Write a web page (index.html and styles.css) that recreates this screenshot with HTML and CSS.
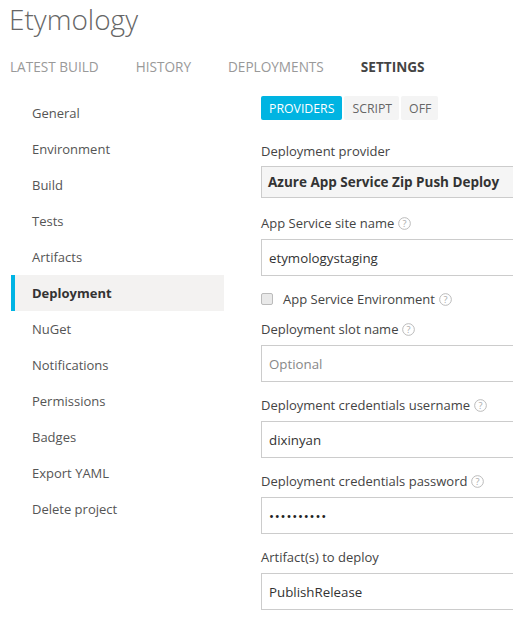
FILE: index.html
```html
<!DOCTYPE html>
<html>
<head>
<meta charset="utf-8">
<link rel="stylesheet" href="styles.css">
</head>
<body>
<div class="page">
  <h1 class="title">Etymology</h1>
  <nav class="tabs">
    <span class="tab">LATEST BUILD</span>
    <span class="tab">HISTORY</span>
    <span class="tab">DEPLOYMENTS</span>
    <span class="tab active">SETTINGS</span>
  </nav>
  <div class="main">
    <ul class="side">
      <li>General</li>
      <li>Environment</li>
      <li>Build</li>
      <li>Tests</li>
      <li>Artifacts</li>
      <li class="active">Deployment</li>
      <li>NuGet</li>
      <li>Notifications</li>
      <li>Permissions</li>
      <li>Badges</li>
      <li>Export YAML</li>
      <li>Delete project</li>
    </ul>
    <div class="content">
      <div class="btns">
        <span class="btn on">PROVIDERS</span>
        <span class="btn">SCRIPT</span>
        <span class="btn">OFF</span>
      </div>
      <div class="field first">
        <div class="label">Deployment provider</div>
        <div class="box select">Azure App Service Zip Push Deploy</div>
      </div>
      <div class="field after-select">
        <div class="label">App Service site name <svg class="help" viewBox="0 0 14 14"><circle cx="7" cy="7" r="6.3"/><text x="7" y="10.6">?</text></svg></div>
        <div class="box">etymologystaging</div>
      </div>
      <div class="check">
        <span class="cb"></span>
        <span class="label">App Service Environment <svg class="help" viewBox="0 0 14 14"><circle cx="7" cy="7" r="6.3"/><text x="7" y="10.6">?</text></svg></span>
      </div>
      <div class="field after-check">
        <div class="label">Deployment slot name <svg class="help" viewBox="0 0 14 14"><circle cx="7" cy="7" r="6.3"/><text x="7" y="10.6">?</text></svg></div>
        <div class="box ph">Optional</div>
      </div>
      <div class="field">
        <div class="label">Deployment credentials username <svg class="help" viewBox="0 0 14 14"><circle cx="7" cy="7" r="6.3"/><text x="7" y="10.6">?</text></svg></div>
        <div class="box">dixinyan</div>
      </div>
      <div class="field">
        <div class="label">Deployment credentials password <svg class="help" viewBox="0 0 14 14"><circle cx="7" cy="7" r="6.3"/><text x="7" y="10.6">?</text></svg></div>
        <div class="box pw">••••••••••</div>
      </div>
      <div class="field">
        <div class="label">Artifact(s) to deploy</div>
        <div class="box">PublishRelease</div>
      </div>
    </div>
  </div>
</div>
</body>
</html>
```
FILE: styles.css
```css
html, body {
  margin: 0;
  padding: 0;
  background: #fff;
  overflow: hidden;
}
body {
  font-family: "Open Sans", "Noto Sans", "Liberation Sans", sans-serif;
  font-size: 13px;
  color: #444;
}
.page {
  width: 560px;
}
.title {
  margin: 0;
  padding: 0 0 0 9px;
  height: 40px;
  line-height: 38px;
  font-size: 28px;
  font-weight: 300;
  color: #666;
}
.tabs {
  display: flex;
  gap: 37px;
  padding-left: 10px;
  margin-top: 16px;
  height: 22px;
  line-height: 22px;
}
.tab {
  font-size: 13.6px;
  color: #999;
}
.tab.active {
  font-weight: 700;
  color: #444;
}
.main {
  display: flex;
  margin-top: 17px;
}
.side {
  list-style: none;
  margin: 0 0 0 11px;
  padding: 0;
  width: 213px;
  flex: none;
}
.side li {
  height: 36px;
  line-height: 36px;
  padding-left: 21px;
  color: #555;
  font-size: 13px;
}
.side li.active {
  background: #f3f2f1;
  font-weight: 700;
  color: #333;
  border-left: 4px solid #00b4e4;
  padding-left: 17px;
}
.content {
  margin-left: 37px;
  width: 300px;
  flex: none;
  padding-top: 1px;
}
.btns {
  display: flex;
  gap: 2px;
  height: 24px;
}
.btn {
  display: flex;
  align-items: center;
  padding: 0 7px 0 8px;
  background: #f4f4f4;
  color: #666;
  font-size: 12.3px;
  border-radius: 2px;
}
.btn.on {
  background: #00b4e2;
  color: #fff;
  padding: 0 8px;
}
.field {
  margin-top: 13px;
}
.field.first {
  margin-top: 21px;
}
.field.after-select {
  margin-top: 15px;
}
.field.after-check {
  margin-top: 9px;
}
.label {
  height: 20px;
  line-height: 20px;
  margin-bottom: 6px;
  color: #444;
  font-size: 13px;
  display: flex;
  align-items: center;
}
.field.first .label {
  margin-bottom: 5px;
}
.help {
  width: 13px;
  height: 13px;
  margin-left: 4px;
}
.help circle {
  fill: none;
  stroke: #b5b5b5;
  stroke-width: 1;
}
.help text {
  font-family: "Open Sans", sans-serif;
  font-size: 10px;
  text-anchor: middle;
  fill: #aaa;
}
.box {
  box-sizing: border-box;
  height: 37px;
  border: 1px solid #ccc;
  padding: 0 7px;
  display: flex;
  align-items: center;
  color: #333;
  font-size: 13.3px;
}
.select {
  height: 32px;
  background: #f5f5f5;
  font-weight: 700;
  font-size: 13.5px;
  color: #333;
  padding-left: 6px;
}
.ph {
  color: #888;
}
.pw {
  letter-spacing: 0.8px;
  color: #222;
}
.check {
  display: flex;
  align-items: center;
  height: 22px;
  margin-top: 12px;
}
.check .label {
  margin: 0;
}
.cb {
  box-sizing: border-box;
  width: 12px;
  height: 12px;
  border: 1px solid #bbb;
  border-radius: 2px;
  background: #e9e9e9;
  margin-right: 10px;
}
```
